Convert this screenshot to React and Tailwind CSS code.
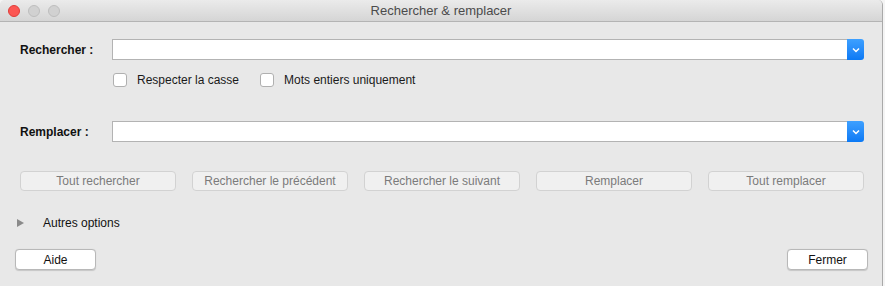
import React from "react";

function Light({ color, border }) {
  return (
    <div
      className="w-[12px] h-[12px] rounded-full"
      style={{ background: color, border: `1px solid ${border}` }}
    />
  );
}

function Combo() {
  return (
    <div className="flex flex-1 h-[21px] mr-[18px]">
      <div className="flex-1 bg-white border border-[#b3b3b3] border-r-0" />
      <div className="w-[17px] h-[21px] rounded-r-[3px] bg-gradient-to-b from-[#3da0ff] to-[#0a79f5] flex items-center justify-center">
        <svg width="8" height="6" viewBox="0 0 8 6">
          <path d="M1 1.5 L4 4.5 L7 1.5" stroke="white" strokeWidth="1.5" fill="none" />
        </svg>
      </div>
    </div>
  );
}

function Check({ label }) {
  return (
    <div className="flex items-center">
      <div className="w-[14px] h-[14px] rounded-[3px] bg-white border border-[#b0b0b0]" />
      <span className="ml-[10px] text-[12px] text-[#1a1a1a]">{label}</span>
    </div>
  );
}

function GrayBtn({ label }) {
  return (
    <div className="w-[156px] h-[20px] rounded-[4px] bg-[#f0f0f0] border border-[#d2d2d2] flex items-center justify-center text-[12px] text-[#7b7b7b]">
      {label}
    </div>
  );
}

function WhiteBtn({ label }) {
  return (
    <div className="w-[81px] h-[21px] rounded-[4px] bg-white border border-[#b8b8b8] shadow-[0_0.5px_1px_rgba(0,0,0,0.15)] flex items-center justify-center text-[12px] text-[#111]">
      {label}
    </div>
  );
}

export default function App() {
  return (
    <div
      className="w-[885px] h-[286px] bg-[#f4f4f4] flex"
      style={{ fontFamily: '"Liberation Sans", Arial, sans-serif' }}
    >
      <div className="w-[883px] h-[286px] bg-[#e8e8e8] border-r border-[#a9a9a9] rounded-t-[5px] flex flex-col overflow-hidden">
        <div className="relative h-[22px] bg-gradient-to-b from-[#ebebeb] to-[#d5d5d5] border-b border-[#b4b4b4] flex items-center">
          <div className="flex gap-[8px] pl-[8px]">
            <Light color="#fc5753" border="#df3d39" />
            <Light color="#d1d1d1" border="#bdbdbd" />
            <Light color="#d1d1d1" border="#bdbdbd" />
          </div>
          <div className="absolute inset-0 flex items-center justify-center text-[13px] text-[#4b4b4b]">
            Rechercher &amp; remplacer
          </div>
        </div>

        <div className="flex items-center mt-[17px]">
          <div className="w-[112px] pl-[20px] text-[12px] font-bold text-[#111]">Rechercher :</div>
          <Combo />
        </div>

        <div className="flex items-center mt-[11px] pl-[113px] gap-[21px]">
          <Check label="Respecter la casse" />
          <Check label="Mots entiers uniquement" />
        </div>

        <div className="flex items-center mt-[32px]">
          <div className="w-[112px] pl-[20px] text-[12px] font-bold text-[#111]">Remplacer :</div>
          <Combo />
        </div>

        <div className="flex gap-[16px] pl-[20px] mt-[29px]">
          <GrayBtn label="Tout rechercher" />
          <GrayBtn label="Rechercher le précédent" />
          <GrayBtn label="Rechercher le suivant" />
          <GrayBtn label="Remplacer" />
          <GrayBtn label="Tout remplacer" />
        </div>

        <div className="flex items-center mt-[24px] pl-[17px] h-[16px]">
          <svg width="7" height="8" viewBox="0 0 7 8">
            <path d="M0 0 L7 4 L0 8 Z" fill="#8a8a8a" />
          </svg>
          <span className="ml-[19px] text-[12px] text-[#111]">Autres options</span>
        </div>

        <div className="flex justify-between mt-[18px] pl-[15px] pr-[14px]">
          <WhiteBtn label="Aide" />
          <WhiteBtn label="Fermer" />
        </div>
      </div>
    </div>
  );
}
